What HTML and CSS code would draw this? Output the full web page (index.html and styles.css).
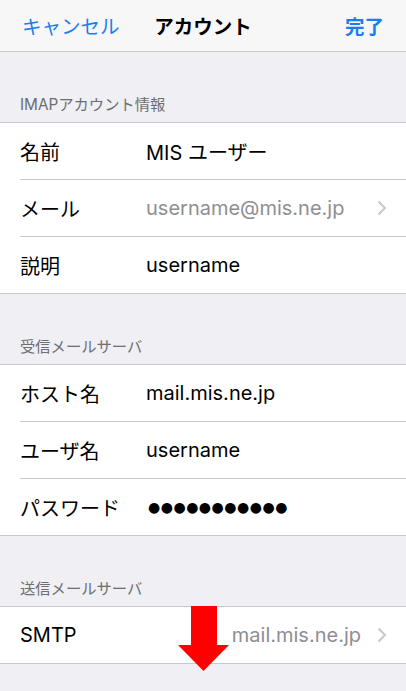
FILE: index.html
```html
<!DOCTYPE html>
<html lang="ja">
<head>
    <meta charset="UTF-8">
    <meta name="viewport" content="width=device-width, initial-scale=1.0">
    <title>アカウント</title>
    <link rel="stylesheet" href="styles.css">
</head>
<body>
    <header class="navbar">
        <span class="nav-left">キャンセル</span>
        <span class="nav-title">アカウント</span>
        <span class="nav-right">完了</span>
    </header>

    <div class="section-header">IMAPアカウント情報</div>
    <ul class="group">
        <li class="row"><span class="label">名前</span><span class="value">MIS ユーザー</span></li>
        <li class="row"><span class="label">メール</span><span class="value muted">username@mis.ne.jp</span>
            <svg class="chevron" width="10" height="16" viewBox="0 0 10 16"><polyline points="1.5,1.5 8,8 1.5,14.5" fill="none" stroke="#c7c7cc" stroke-width="2"/></svg>
        </li>
        <li class="row"><span class="label">説明</span><span class="value">username</span></li>
    </ul>

    <div class="section-header">受信メールサーバ</div>
    <ul class="group">
        <li class="row"><span class="label">ホスト名</span><span class="value">mail.mis.ne.jp</span></li>
        <li class="row"><span class="label">ユーザ名</span><span class="value">username</span></li>
        <li class="row"><span class="label">パスワード</span><span class="value dots">●●●●●●●●●●●</span></li>
    </ul>

    <div class="section-header">送信メールサーバ</div>
    <ul class="group">
        <li class="row"><span class="label">SMTP</span><span class="value muted right">mail.mis.ne.jp</span>
            <svg class="chevron" width="10" height="16" viewBox="0 0 10 16"><polyline points="1.5,1.5 8,8 1.5,14.5" fill="none" stroke="#c7c7cc" stroke-width="2"/></svg>
            <svg class="arrow" width="51" height="65" viewBox="0 0 51 65">
                <rect x="13" y="0" width="26" height="40" fill="#ff0000"/>
                <polygon points="0,39 51,39 25.5,65" fill="#ff0000"/>
            </svg>
        </li>
    </ul>
</body>
</html>
```

FILE: styles.css
```css
body {
    margin: 0;
    padding: 0;
    background-color: #efeff4;
    font-family: Inter, "Noto Sans CJK JP", sans-serif;
    color: #000;
    width: 406px;
    height: 691px;
    overflow: hidden;
}
.navbar {
    height: 51px;
    background-color: #f7f7f8;
    border-bottom: 1px solid #c8c7cc;
    display: flex;
    align-items: center;
    justify-content: space-between;
    padding: 0 22px;
    font-size: 19.5px;
    position: relative;
}
.nav-left {
    color: #1a7ef2;
}
.nav-title {
    position: absolute;
    left: 0;
    right: 0;
    text-align: center;
    font-weight: bold;
    pointer-events: none;
}
.nav-right {
    color: #1a7ef2;
    font-weight: bold;
}
.section-header {
    height: 70px;
    box-sizing: border-box;
    padding: 0 20px 9px;
    display: flex;
    align-items: flex-end;
    font-size: 15.3px;
    line-height: 17px;
    color: #6d6d72;
}
.group {
    list-style-type: none;
    margin: 0;
    padding: 0 0 0 20px;
    background-color: #fff;
    border-top: 1px solid #c8c7cc;
    border-bottom: 1px solid #c8c7cc;
}
.row {
    height: 56px;
    display: flex;
    align-items: center;
    font-size: 20px;
    position: relative;
}
.row + .row {
    border-top: 1px solid #c8c7cc;
}
.label {
    width: 126px;
    flex-shrink: 0;
}
.value {
    flex: 1;
}
.muted {
    color: #8e8e93;
}
.right {
    text-align: right;
}
.dots {
    font-family: "DejaVu Sans", sans-serif;
    font-size: 14px;
    letter-spacing: 0.5px;
    padding-left: 2px;
}
.chevron {
    flex-shrink: 0;
    margin: 0 19px 0 16px;
}
.arrow {
    position: absolute;
    left: 158px;
    top: -1px;
}
```
